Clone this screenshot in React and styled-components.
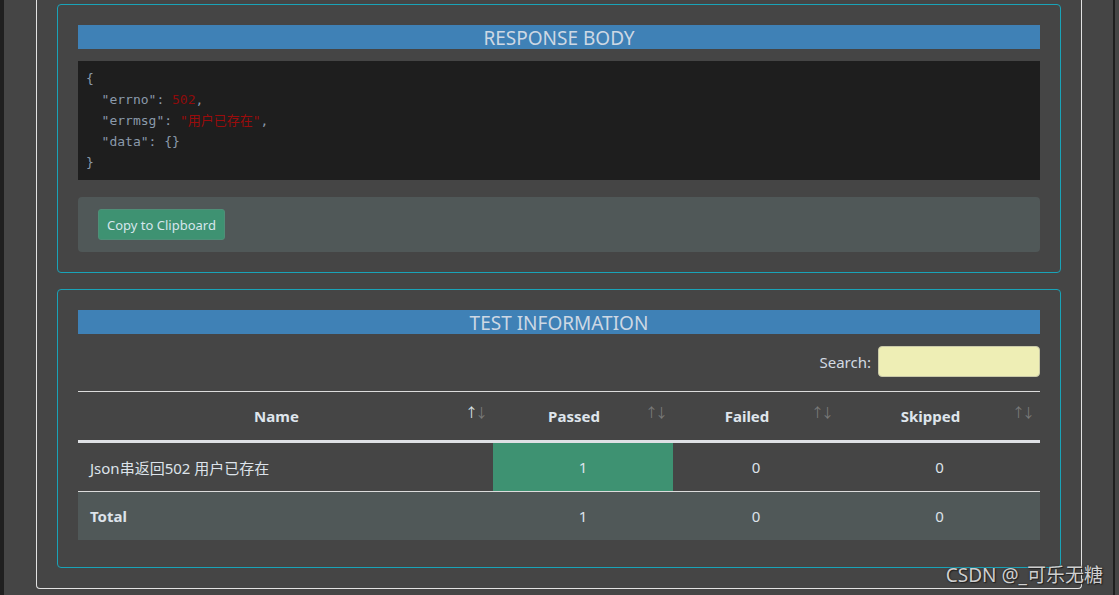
import React from 'react';
import styled, { createGlobalStyle } from 'styled-components';

const GlobalStyle = createGlobalStyle`
  html, body {
    margin: 0;
    padding: 0;
    background: #454545;
  }
  body {
    font-family: "Noto Sans", "Noto Sans CJK SC", sans-serif;
    color: #dde3ea;
  }
`;

const rows = [
  { name: 'Json串返回502 用户已存在', passed: 1, failed: 0, skipped: 0 },
];

const columns = [
  { key: 'name', label: 'Name', width: 415, active: true },
  { key: 'passed', label: 'Passed', width: 180 },
  { key: 'failed', label: 'Failed', width: 166 },
  { key: 'skipped', label: 'Skipped', width: 201 },
];

const App = () => {
  const totals = rows.reduce(
    (acc, r) => ({
      passed: acc.passed + r.passed,
      failed: acc.failed + r.failed,
      skipped: acc.skipped + r.skipped,
    }),
    { passed: 0, failed: 0, skipped: 0 }
  );

  return (
    <>
      <GlobalStyle />
      <Page>
        <Edge />
        <Outer>
          <Card>
            <SectionTitle>RESPONSE BODY</SectionTitle>
            <CodeBlock>
              <Line>{'{'}</Line>
              <Line $indent>
                "errno": <Num>502</Num>,
              </Line>
              <Line $indent>
                "errmsg": <Str>"用户已存在"</Str>,
              </Line>
              <Line $indent>"data": {'{}'}</Line>
              <Line>{'}'}</Line>
            </CodeBlock>
            <ActionPanel>
              <CopyButton type="button">Copy to Clipboard</CopyButton>
            </ActionPanel>
          </Card>

          <Card>
            <SectionTitle>TEST INFORMATION</SectionTitle>
            <SearchRow>
              <SearchLabel htmlFor="search">Search:</SearchLabel>
              <SearchInput id="search" type="search" />
            </SearchRow>
            <Table>
              <colgroup>
                {columns.map((c) => (
                  <col key={c.key} style={{ width: c.width }} />
                ))}
              </colgroup>
              <thead>
                <tr>
                  {columns.map((c) => (
                    <Th key={c.key}>
                      {c.label}
                      <SortIcon>
                        <Arrow $on={c.active}>↑</Arrow>
                        <Arrow>↓</Arrow>
                      </SortIcon>
                    </Th>
                  ))}
                </tr>
              </thead>
              <tbody>
                {rows.map((r) => (
                  <tr key={r.name}>
                    <Td $left>{r.name}</Td>
                    <Td $pass={r.passed > 0}>{r.passed}</Td>
                    <Td>{r.failed}</Td>
                    <Td>{r.skipped}</Td>
                  </tr>
                ))}
              </tbody>
              <tfoot>
                <TotalRow>
                  <Td $left $bold>Total</Td>
                  <Td>{totals.passed}</Td>
                  <Td>{totals.failed}</Td>
                  <Td>{totals.skipped}</Td>
                </TotalRow>
              </tfoot>
            </Table>
          </Card>
        </Outer>
        <Edge $right />
        <Watermark>CSDN @_可乐无糖</Watermark>
      </Page>
    </>
  );
};

const Page = styled.div`
  position: relative;
  display: flex;
  align-items: flex-start;
  width: 1119px;
  height: 595px;
  overflow: hidden;
  background: #454545;
`;

const Edge = styled.div`
  flex: none;
  align-self: stretch;
  width: ${(p) => (p.$right ? '2px' : '4px')};
  margin-left: ${(p) => (p.$right ? '31px' : '0')};
  background: #1f1f1f;
`;

const Outer = styled.div`
  flex: none;
  box-sizing: border-box;
  width: 1046px;
  margin-left: 32px;
  padding: 4px 20px 20px;
  border: 1px solid #e2e2e2;
  border-top: none;
  border-radius: 0 0 4px 4px;
  display: flex;
  flex-direction: column;
  gap: 16px;
`;

const Card = styled.section`
  border: 1px solid #19a3b8;
  border-radius: 4px;
  padding: 20px;
  display: flex;
  flex-direction: column;
`;

const SectionTitle = styled.h2`
  margin: 0;
  padding-top: 3px;
  background: #3f81b6;
  color: #cdd8e4;
  font-size: 19px;
  font-weight: 400;
  line-height: 21px;
  text-align: center;
`;

const CodeBlock = styled.pre`
  margin: 12px 0 0;
  padding: 7px 8px;
  background: #1e1e1e;
  font-family: "DejaVu Sans Mono", "Noto Sans CJK SC", monospace;
  font-size: 13px;
  line-height: 21px;
  color: #8b9aab;
`;

const Line = styled.div`
  padding-left: ${(p) => (p.$indent ? '15.6px' : '0')};
  white-space: pre;
`;

const Num = styled.span`
  color: #8f0b0b;
`;

const Str = styled.span`
  color: #9a0c0c;
`;

const ActionPanel = styled.div`
  margin-top: 17px;
  padding: 12px 20px;
  background: #505858;
  border-radius: 4px;
  display: flex;
`;

const CopyButton = styled.button`
  height: 31px;
  padding: 0 8px;
  background: #3e9272;
  border: 1px solid #4f8f78;
  border-radius: 3px;
  color: #d6e6ec;
  font-family: inherit;
  font-size: 13px;
  cursor: pointer;
`;

const SearchRow = styled.div`
  display: flex;
  justify-content: flex-end;
  align-items: center;
  gap: 7px;
  margin-top: 12px;
`;

const SearchLabel = styled.label`
  font-size: 15px;
  color: #d2dae2;
`;

const SearchInput = styled.input`
  width: 162px;
  height: 31px;
  box-sizing: border-box;
  background: #eeeeb5;
  border: 1px solid #c9c9a8;
  border-radius: 4px;
  outline: none;
`;

const Table = styled.table`
  margin-top: 14px;
  margin-bottom: 7px;
  width: 100%;
  border-collapse: collapse;
  table-layout: fixed;
  font-size: 15px;
`;

const Th = styled.th`
  position: relative;
  height: 48px;
  padding: 0 30px 0 12px;
  border-top: 1px solid #dcdcdc;
  border-bottom: 3px solid #dfe1e5;
  font-weight: 700;
  color: #dfe5ec;
  text-align: center;
`;

const SortIcon = styled.span`
  position: absolute;
  right: 8px;
  top: 10px;
  display: flex;
  font-size: 13px;
  font-weight: 400;
  letter-spacing: -3px;
`;

const Arrow = styled.span`
  color: ${(p) => (p.$on ? '#dfe5ec' : '#7a7a7a')};
`;

const Td = styled.td`
  height: 48px;
  padding: 0 12px;
  text-align: ${(p) => (p.$left ? 'left' : 'center')};
  font-weight: ${(p) => (p.$bold ? 700 : 400)};
  background: ${(p) => (p.$pass ? '#3e9272' : 'transparent')};
  color: #dde3ea;
  tbody & {
    border-bottom: 1px solid #dcdcdc;
  }
`;

const TotalRow = styled.tr`
  background: #505858;
`;

const Watermark = styled.div`
  position: absolute;
  right: 16px;
  bottom: 7px;
  font-family: "Noto Sans", "Noto Sans CJK SC", sans-serif;
  font-size: 19px;
  color: #cfcfcf;
  text-shadow: 0 0 2px #222, 1px 1px 1px #222;
`;

export default App;
